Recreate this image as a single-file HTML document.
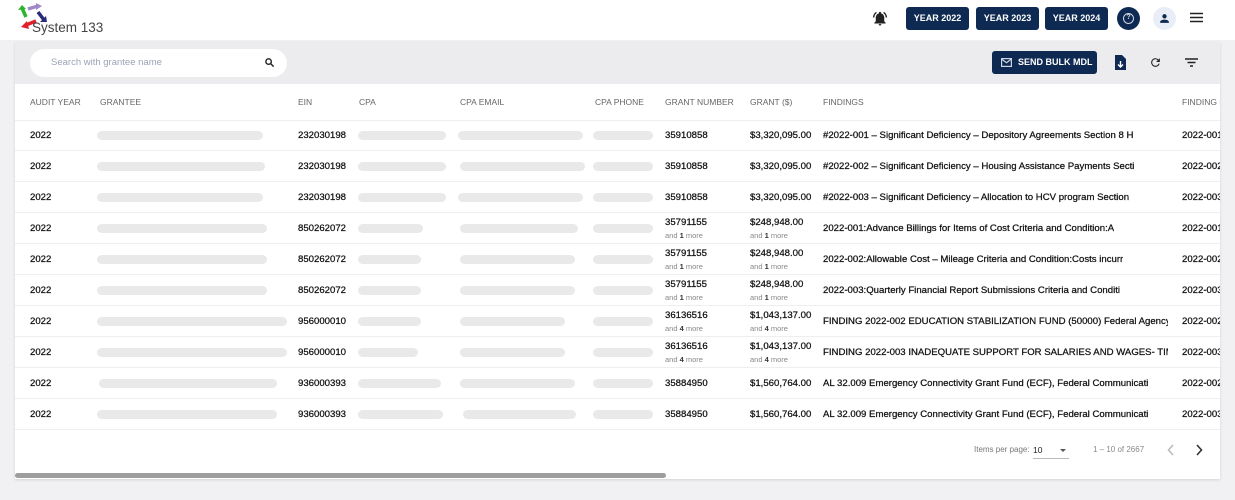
<!DOCTYPE html>
<html><head><meta charset="utf-8"><style>
*{margin:0;padding:0;box-sizing:border-box}
body{width:1235px;height:500px;background:#f1f1f4;font-family:"Liberation Sans",Arial,sans-serif;position:relative;overflow:hidden;color:#1e1e1e}
.hdr{position:absolute;left:0;top:0;width:1235px;height:40px;background:#fff}
.a{position:absolute;white-space:nowrap}
.btn{position:absolute;top:7px;height:23px;background:#0f2a52;color:#fff;font-size:9px;font-weight:bold;border-radius:3px;text-align:center;line-height:23px}
.card{position:absolute;left:15px;top:42px;width:1205px;height:437px;background:#fff;box-shadow:0 1px 3px rgba(0,0,0,.12);overflow:hidden}
.tb{position:absolute;left:0;top:0;width:1205px;height:42px;background:#ececef}
.th{position:absolute;top:55px;font-size:8.5px;color:#666;white-space:nowrap}
.row{position:absolute;left:0;width:1205px;height:31px;border-bottom:1px solid #eeeeee}
.c{position:absolute;font-size:9.6px;color:#111;white-space:nowrap;top:10px;-webkit-text-stroke:.25px #111}
.f{max-width:345px;overflow:hidden}
.c2{top:4px}
.m{position:absolute;top:18px;font-size:7.5px;color:#888;white-space:nowrap}
.m b{color:#333}
.bl{position:absolute;top:11px;height:9px;background:#e9e9e9;border-radius:5px}
</style></head><body>
<div class="hdr">
<svg class="a" style="left:18px;top:3px" width="30" height="26" viewBox="0 0 30 26">
<path d="M10 6 L20 3" stroke="#a088c8" stroke-width="3.5"/><path d="M18 0 L24 3 L18 7z" fill="#a088c8"/>
<path d="M4 5 L8 14" stroke="#2bb52b" stroke-width="3.5"/><path d="M0 7 L4 2 L8 6z" fill="#2bb52b"/>
<path d="M20 9 L26 17" stroke="#2a2a7a" stroke-width="3.5"/><path d="M22 19 L29 19 L28 13z" fill="#2a2a7a"/>
<path d="M8 22 L18 18" stroke="#e0202a" stroke-width="3.5"/><path d="M9 18 L3 24 L11 26z" fill="#e0202a"/>
</svg>
<div class="a" style="left:32px;top:20px;font-size:13.5px;color:#444">System 133</div>
<svg class="a" style="left:871px;top:10px" width="18" height="17" viewBox="0 0 24 24"><path d="M12 22c1.1 0 2-.9 2-2h-4c0 1.1.9 2 2 2zm6-6v-5c0-3.1-1.6-5.6-4.5-6.3V4c0-.8-.7-1.5-1.5-1.5s-1.5.7-1.5 1.5v.7C7.6 5.4 6 7.9 6 11v5l-2 2v1h16v-1l-2-2zM7.6 4.1 6.2 2.6C3.8 4.4 2.2 7.3 2 10.5h2c.2-2.7 1.5-5 3.6-6.4zM20 10.5h2c-.2-3.2-1.7-6.1-4.1-7.9L16.4 4.1c2.1 1.4 3.5 3.700 3.6 6.4z" fill="#222"/></svg>
<div class="btn" style="left:906px;width:63px">YEAR 2022</div>
<div class="btn" style="left:976px;width:63px">YEAR 2023</div>
<div class="btn" style="left:1045px;width:63px">YEAR 2024</div>
<div class="a" style="left:1117px;top:7px;width:23px;height:23px;border-radius:50%;background:#0f2a52"></div>
<div class="a" style="left:1123px;top:13px;width:11px;height:11px;border-radius:50%;border:1.5px solid #cfd6e2;color:#cfd6e2;font-size:7px;font-weight:bold;text-align:center;line-height:8px">?</div>
<div class="a" style="left:1153px;top:7px;width:23px;height:23px;border-radius:50%;background:#e8edf7"></div>
<svg class="a" style="left:1158px;top:12px" width="13" height="13" viewBox="0 0 24 24"><path d="M12 12c2.2 0 4-1.8 4-4s-1.8-4-4-4-4 1.8-4 4 1.8 4 4 4zm0 2c-2.7 0-8 1.3-8 4v2h16v-2c0-2.7-5.3-4-8-4z" fill="#0f2a52"/></svg>
<svg class="a" style="left:1190px;top:12px" width="13" height="11" viewBox="0 0 13 11"><path d="M0 1.5h13M0 5.5h13M0 9.5h13" stroke="#222" stroke-width="1.6"/></svg>
</div>
<div class="card">
<div class="tb"></div>
<div class="a" style="left:15px;top:7px;width:257px;height:28px;background:#fff;border-radius:14px"></div>
<div class="a" style="left:36px;top:15px;font-size:9.5px;color:#9aa3b5">Search with grantee name</div>
<svg class="a" style="left:249px;top:15px" width="11" height="11" viewBox="0 0 24 24"><circle cx="10" cy="10" r="6" stroke="#222" stroke-width="3" fill="none"/><path d="M14.5 14.5 21 21" stroke="#222" stroke-width="3.2"/></svg>
<div class="a" style="left:977px;top:9px;width:105px;height:23px;background:#0f2a52;border-radius:3px"></div>
<svg class="a" style="left:986px;top:16px" width="11" height="9" viewBox="0 0 11 9"><rect x=".6" y=".6" width="9.8" height="7.8" fill="none" stroke="#cfd6e2" stroke-width="1.2"/><path d="M.6 1 5.5 4.7 10.4 1" fill="none" stroke="#cfd6e2" stroke-width="1.2"/></svg>
<div class="a" style="left:1003px;top:15px;font-size:9px;font-weight:bold;color:#fff">SEND BULK MDL</div>
<svg class="a" style="left:1100px;top:13px" width="11" height="15" viewBox="0 0 11 15"><path d="M0 0h7l4 4v11H0z" fill="#0f2a52"/><path d="M5.5 6v6M3 9.5l2.5 2.5 2.5-2.5" stroke="#fff" stroke-width="1.4" fill="none"/></svg>
<svg class="a" style="left:1134px;top:14px" width="13" height="13" viewBox="0 0 24 24"><path d="M17.6 6.4A8 8 0 1 0 19.7 14h-2.1A6 6 0 1 1 12 6c1.7 0 3.1.7 4.2 1.8L13 11h7V4z" fill="#222"/></svg>
<svg class="a" style="left:1170px;top:16px" width="13" height="9" viewBox="0 0 13 9"><path d="M0 1h13M2.5 4.5h8M5 8h3" stroke="#222" stroke-width="1.5"/></svg>

<div class="th" style="left:15px">AUDIT YEAR</div><div class="th" style="left:85px">GRANTEE</div><div class="th" style="left:283px">EIN</div><div class="th" style="left:344px">CPA</div><div class="th" style="left:445px">CPA EMAIL</div><div class="th" style="left:580px">CPA PHONE</div><div class="th" style="left:650px">GRANT NUMBER</div><div class="th" style="left:735px">GRANT ($)</div><div class="th" style="left:808px">FINDINGS</div><div class="th" style="left:1167px">FINDING NUMBER</div>
<div class="a" style="left:0;top:78px;width:1205px;border-top:1px solid #eee"></div>

<div class="row" style="top:78px"><div class="c" style="left:15px">2022</div><div class="bl" style="left:82px;width:166px"></div><div class="c" style="left:283px">232030198</div><div class="bl" style="left:343px;width:88px"></div><div class="bl" style="left:443px;width:125px"></div><div class="bl" style="left:578px;width:60px"></div><div class="c" style="left:650px">35910858</div><div class="c" style="left:735px">$3,320,095.00</div><div class="c f" style="left:808px">#2022-001 – Significant Deficiency – Depository Agreements Section 8 H</div><div class="c" style="left:1167px">2022-001</div></div>
<div class="row" style="top:109px"><div class="c" style="left:15px">2022</div><div class="bl" style="left:82px;width:168px"></div><div class="c" style="left:283px">232030198</div><div class="bl" style="left:343px;width:88px"></div><div class="bl" style="left:445px;width:125px"></div><div class="bl" style="left:578px;width:60px"></div><div class="c" style="left:650px">35910858</div><div class="c" style="left:735px">$3,320,095.00</div><div class="c f" style="left:808px">#2022-002 – Significant Deficiency – Housing Assistance Payments Secti</div><div class="c" style="left:1167px">2022-002</div></div>
<div class="row" style="top:140px"><div class="c" style="left:15px">2022</div><div class="bl" style="left:82px;width:166px"></div><div class="c" style="left:283px">232030198</div><div class="bl" style="left:343px;width:88px"></div><div class="bl" style="left:443px;width:125px"></div><div class="bl" style="left:578px;width:60px"></div><div class="c" style="left:650px">35910858</div><div class="c" style="left:735px">$3,320,095.00</div><div class="c f" style="left:808px">#2022-003 – Significant Deficiency – Allocation to HCV program Section</div><div class="c" style="left:1167px">2022-003</div></div>
<div class="row" style="top:171px"><div class="c" style="left:15px">2022</div><div class="bl" style="left:82px;width:170px"></div><div class="c" style="left:283px">850262072</div><div class="bl" style="left:343px;width:65px"></div><div class="bl" style="left:445px;width:118px"></div><div class="bl" style="left:578px;width:60px"></div><div class="c c2" style="left:650px">35791155</div><div class="m" style="left:650px">and <b>1</b> more</div><div class="c c2" style="left:735px">$248,948.00</div><div class="m" style="left:735px">and <b>1</b> more</div><div class="c f" style="left:808px">2022-001:Advance Billings for Items of Cost Criteria and Condition:A</div><div class="c" style="left:1167px">2022-001</div></div>
<div class="row" style="top:202px"><div class="c" style="left:15px">2022</div><div class="bl" style="left:82px;width:170px"></div><div class="c" style="left:283px">850262072</div><div class="bl" style="left:343px;width:63px"></div><div class="bl" style="left:445px;width:115px"></div><div class="bl" style="left:578px;width:60px"></div><div class="c c2" style="left:650px">35791155</div><div class="m" style="left:650px">and <b>1</b> more</div><div class="c c2" style="left:735px">$248,948.00</div><div class="m" style="left:735px">and <b>1</b> more</div><div class="c f" style="left:808px">2022-002:Allowable Cost – Mileage Criteria and Condition:Costs incurr</div><div class="c" style="left:1167px">2022-002</div></div>
<div class="row" style="top:233px"><div class="c" style="left:15px">2022</div><div class="bl" style="left:82px;width:170px"></div><div class="c" style="left:283px">850262072</div><div class="bl" style="left:343px;width:63px"></div><div class="bl" style="left:445px;width:115px"></div><div class="bl" style="left:578px;width:60px"></div><div class="c c2" style="left:650px">35791155</div><div class="m" style="left:650px">and <b>1</b> more</div><div class="c c2" style="left:735px">$248,948.00</div><div class="m" style="left:735px">and <b>1</b> more</div><div class="c f" style="left:808px">2022-003:Quarterly Financial Report Submissions Criteria and Conditi</div><div class="c" style="left:1167px">2022-003</div></div>
<div class="row" style="top:264px"><div class="c" style="left:15px">2022</div><div class="bl" style="left:82px;width:190px"></div><div class="c" style="left:283px">956000010</div><div class="bl" style="left:343px;width:63px"></div><div class="bl" style="left:445px;width:105px"></div><div class="bl" style="left:578px;width:60px"></div><div class="c c2" style="left:650px">36136516</div><div class="m" style="left:650px">and <b>4</b> more</div><div class="c c2" style="left:735px">$1,043,137.00</div><div class="m" style="left:735px">and <b>4</b> more</div><div class="c f" style="left:808px">FINDING 2022-002 EDUCATION STABILIZATION FUND (50000) Federal Agency:</div><div class="c" style="left:1167px">2022-002</div></div>
<div class="row" style="top:295px"><div class="c" style="left:15px">2022</div><div class="bl" style="left:82px;width:190px"></div><div class="c" style="left:283px">956000010</div><div class="bl" style="left:343px;width:60px"></div><div class="bl" style="left:445px;width:105px"></div><div class="bl" style="left:578px;width:60px"></div><div class="c c2" style="left:650px">36136516</div><div class="m" style="left:650px">and <b>4</b> more</div><div class="c c2" style="left:735px">$1,043,137.00</div><div class="m" style="left:735px">and <b>4</b> more</div><div class="c f" style="left:808px">FINDING 2022-003 INADEQUATE SUPPORT FOR SALARIES AND WAGES- TIME CERTI</div><div class="c" style="left:1167px">2022-003</div></div>
<div class="row" style="top:326px"><div class="c" style="left:15px">2022</div><div class="bl" style="left:84px;width:178px"></div><div class="c" style="left:283px">936000393</div><div class="bl" style="left:343px;width:83px"></div><div class="bl" style="left:445px;width:115px"></div><div class="bl" style="left:578px;width:60px"></div><div class="c" style="left:650px">35884950</div><div class="c" style="left:735px">$1,560,764.00</div><div class="c f" style="left:808px">AL 32.009 Emergency Connectivity Grant Fund (ECF), Federal Communicati</div><div class="c" style="left:1167px">2022-002</div></div>
<div class="row" style="top:357px"><div class="c" style="left:15px">2022</div><div class="bl" style="left:82px;width:180px"></div><div class="c" style="left:283px">936000393</div><div class="bl" style="left:343px;width:85px"></div><div class="bl" style="left:448px;width:113px"></div><div class="bl" style="left:578px;width:60px"></div><div class="c" style="left:650px">35884950</div><div class="c" style="left:735px">$1,560,764.00</div><div class="c f" style="left:808px">AL 32.009 Emergency Connectivity Grant Fund (ECF), Federal Communicati</div><div class="c" style="left:1167px">2022-003</div></div>

<div class="a" style="left:959px;top:403px;font-size:8px;color:#777">Items per page:</div>
<div class="a" style="left:1018px;top:403px;font-size:8.5px;color:#222">10</div>
<div class="a" style="left:1018px;top:416px;width:36px;border-top:1px solid #bbb"></div>
<div class="a" style="left:1045px;top:407px;width:0;height:0;border-left:3.5px solid transparent;border-right:3.5px solid transparent;border-top:3.5px solid #555"></div>
<div class="a" style="left:1078px;top:403px;font-size:8px;color:#888">1 – 10 of 2667</div>
<svg class="a" style="left:1152px;top:402px" width="8" height="12" viewBox="0 0 8 12"><path d="M6 1 1.5 6 6 11" stroke="#bbb" stroke-width="1.6" fill="none"/></svg>
<svg class="a" style="left:1180px;top:402px" width="8" height="12" viewBox="0 0 8 12"><path d="M2 1l4.5 5L2 11" stroke="#333" stroke-width="1.6" fill="none"/></svg>
<div class="a" style="left:0;top:431px;width:651px;height:5px;background:#9e9e9e;border-radius:3px"></div>
</div>
</body></html>
